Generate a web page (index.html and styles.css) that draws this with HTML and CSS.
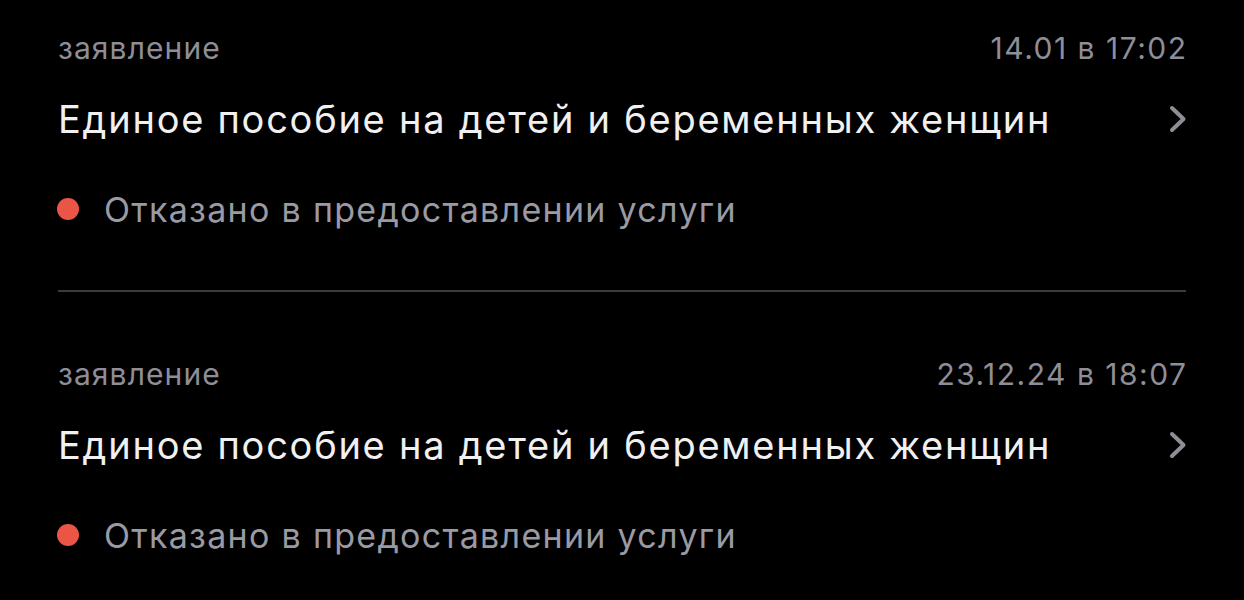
FILE: index.html
```html
<!DOCTYPE html>
<html lang="ru">
<head>
<meta charset="utf-8">
<link rel="stylesheet" href="styles.css">
</head>
<body>
<div class="list">
  <div class="item">
    <div class="meta">
      <span class="type">заявление</span>
      <span class="date">14.01 в 17:02</span>
    </div>
    <div class="title-row">
      <span class="title">Единое пособие на детей и беременных женщин</span>
      <svg class="chev" width="18" height="28" viewBox="0 0 18 28"><path d="M3 3 L14.5 14 L3 25" fill="none" stroke="#8e8e96" stroke-width="4" stroke-linecap="round" stroke-linejoin="round"/></svg>
    </div>
    <div class="status"><span class="dot"></span><span class="status-text">Отказано в предоставлении услуги</span></div>
  </div>
  <div class="sep"></div>
  <div class="item second">
    <div class="meta">
      <span class="type">заявление</span>
      <span class="date">23.12.24 в 18:07</span>
    </div>
    <div class="title-row">
      <span class="title">Единое пособие на детей и беременных женщин</span>
      <svg class="chev" width="18" height="28" viewBox="0 0 18 28"><path d="M3 3 L14.5 14 L3 25" fill="none" stroke="#8e8e96" stroke-width="4" stroke-linecap="round" stroke-linejoin="round"/></svg>
    </div>
    <div class="status"><span class="dot"></span><span class="status-text">Отказано в предоставлении услуги</span></div>
  </div>
</div>
</body>
</html>
```
FILE: styles.css
```css
html, body {
  margin: 0;
  padding: 0;
  background: #000;
}
body {
  font-family: Inter, "Noto Sans", sans-serif;
  width: 1244px;
  height: 600px;
  overflow: hidden;
}
.list {
  padding: 28px 58px 0 58px;
}
.item {
  display: flex;
  flex-direction: column;
}
.item.second {
  padding-top: 62px;
}
.meta {
  display: flex;
  justify-content: space-between;
  align-items: center;
  height: 40px;
  font-size: 30px;
  letter-spacing: 1.1px;
  color: #8e8e98;
}
.date {
  letter-spacing: 1.5px;
  margin-right: -1.5px;
}
.title-row {
  display: flex;
  justify-content: space-between;
  align-items: center;
  height: 50px;
  margin-top: 26px;
}
.title {
  font-size: 38px;
  letter-spacing: 1.75px;
  color: #f0f0f2;
}
.chev {
  display: block;
  margin-right: -1px;
}
.status {
  display: flex;
  align-items: center;
  height: 50px;
  margin-top: 40px;
  font-size: 34px;
  letter-spacing: 1.3px;
  color: #9a9aa4;
}
.dot {
  width: 22px;
  height: 22px;
  border-radius: 50%;
  background: #ea5546;
  margin-right: 25px;
  margin-left: -1px;
}
.sep {
  height: 2px;
  background: #3a3a40;
  margin-top: 56px;
}
```
